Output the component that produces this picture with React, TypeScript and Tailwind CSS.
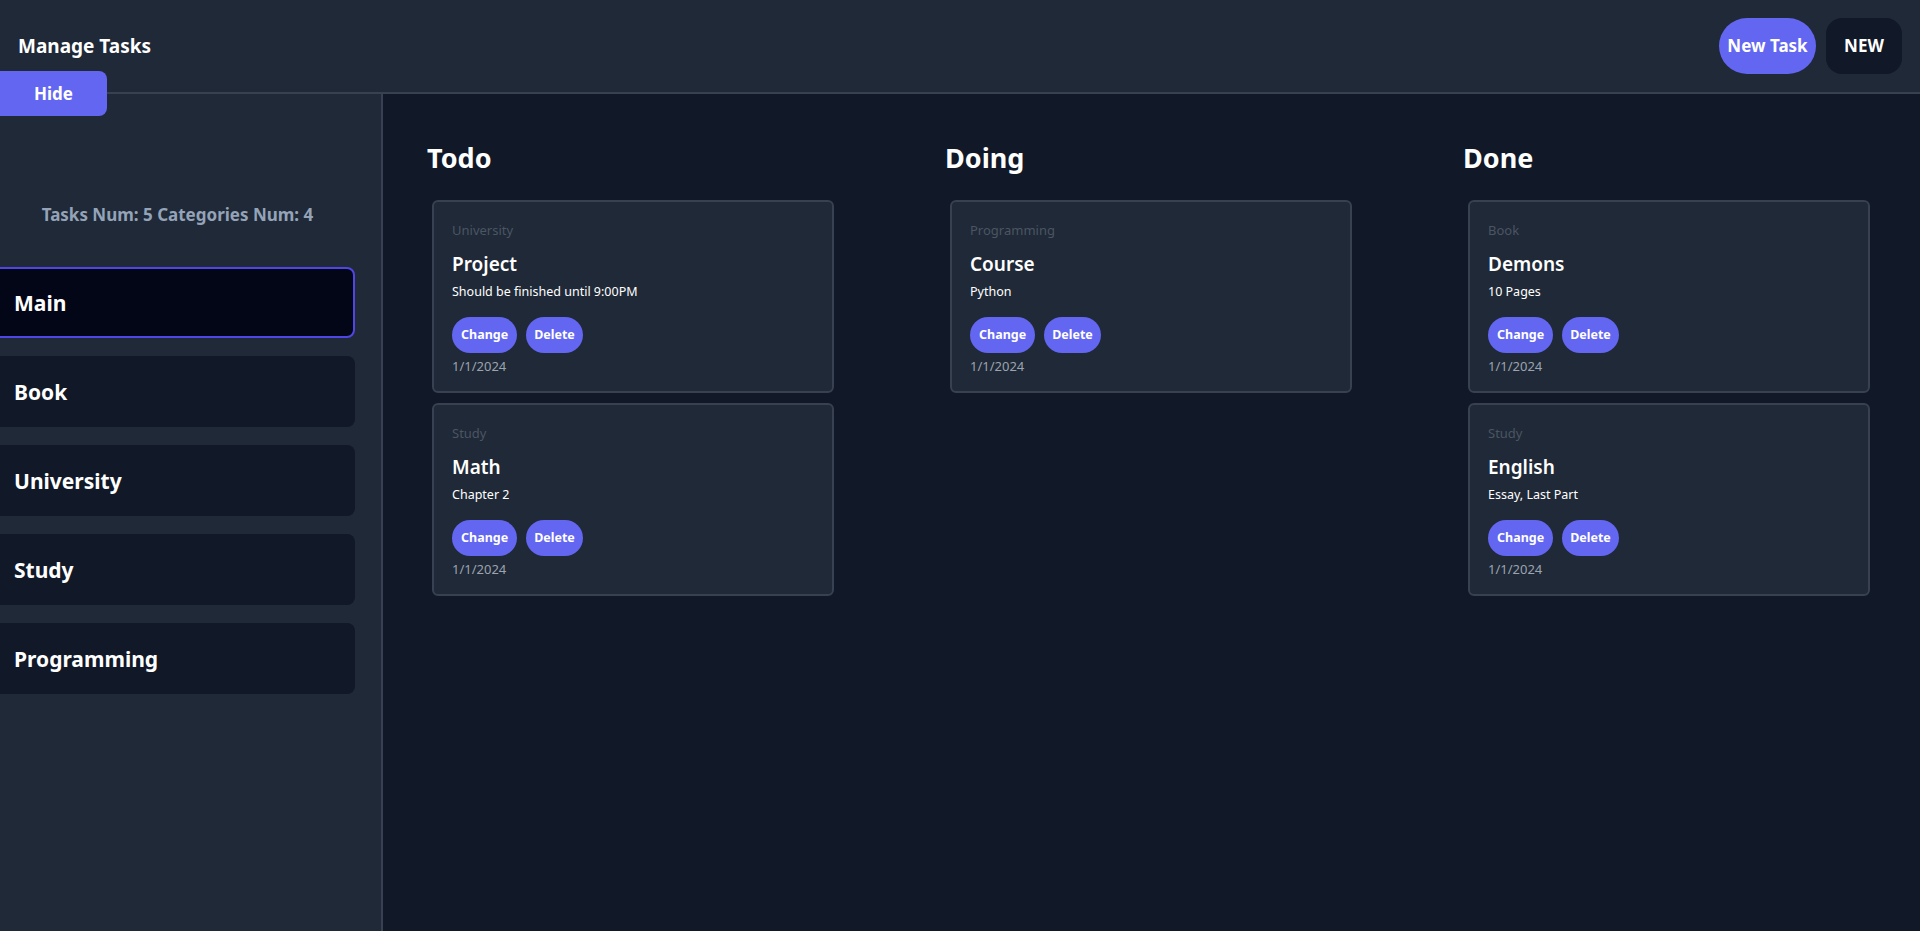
import React from "react";

type Task = {
  category: string;
  title: string;
  description: string;
  date: string;
};

const columns: { name: string; tasks: Task[] }[] = [
  {
    name: "Todo",
    tasks: [
      { category: "University", title: "Project", description: "Should be finished until 9:00PM", date: "1/1/2024" },
      { category: "Study", title: "Math", description: "Chapter 2", date: "1/1/2024" },
    ],
  },
  {
    name: "Doing",
    tasks: [{ category: "Programming", title: "Course", description: "Python", date: "1/1/2024" }],
  },
  {
    name: "Done",
    tasks: [
      { category: "Book", title: "Demons", description: "10 Pages", date: "1/1/2024" },
      { category: "Study", title: "English", description: "Essay, Last Part", date: "1/1/2024" },
    ],
  },
];

const categories = ["Main", "Book", "University", "Study", "Programming"];

function TaskCard({ task }: { task: Task }) {
  return (
    <div className="ml-[5px] w-[402px] rounded-md border-2 border-[#374151] bg-[#1f2937] px-[18px] pt-[18px] pb-[14px]">
      <p className="text-[13px] leading-[21px] text-[#4b5563]">{task.category}</p>
      <h3 className="mt-[8px] text-[19px] leading-[30px] font-semibold text-white">{task.title}</h3>
      <p className="mt-[2px] text-[12.5px] leading-[21px] text-white">{task.description}</p>
      <div className="mt-[15px] flex gap-[9px]">
        <button className="h-[36px] rounded-full bg-[#6366f1] px-[9px] text-[12.5px] font-bold text-white">
          Change
        </button>
        <button className="h-[36px] rounded-full bg-[#6366f1] px-[8px] text-[12.5px] font-bold text-white">
          Delete
        </button>
      </div>
      <p className="mt-[3px] text-[13px] leading-[21px] text-[#9ca3af]">{task.date}</p>
    </div>
  );
}

export default function App() {
  return (
    <div className="flex h-[931px] flex-col bg-[#111827] font-['Noto_Sans','Lato',sans-serif] text-white">
      {/* Header */}
      <header className="relative flex h-[94px] shrink-0 items-center justify-between border-b-2 border-[#374151] bg-[#1f2937] pl-[18px] pr-[18px]">
        <h1 className="text-[19px] font-bold">Manage Tasks</h1>
        <div className="flex gap-[10px]">
          <button className="h-[56px] w-[97px] rounded-full bg-[#6366f1] text-[17px] font-bold">New Task</button>
          <button className="h-[56px] w-[76px] rounded-2xl bg-[#111827] text-[17px] font-bold">NEW</button>
        </div>
        <button className="absolute top-[71px] left-0 z-10 h-[45px] w-[107px] rounded-r-lg bg-[#6366f1] text-[17px] font-bold">
          Hide
        </button>
      </header>

      <div className="flex min-h-0 flex-1">
        {/* Sidebar */}
        <aside className="w-[383px] shrink-0 border-r-2 border-[#374151] bg-[#1f2937]">
          <div className="w-[355px]">
            <p className="pt-[109px] text-center text-[17px] leading-[24px] font-bold text-[#94a3b8]">
              Tasks Num: 5 Categories Num: 4
            </p>
            <div className="mt-[40px] flex flex-col gap-[18px]">
              {categories.map((c, i) => (
                <div
                  key={c}
                  className={
                    i === 0
                      ? "-ml-[10px] flex h-[71px] items-center rounded-lg border-2 border-[#4f46e5] bg-[#020617] pt-[3px] pl-[22px] text-[21px] font-bold"
                      : "-ml-[10px] flex h-[71px] items-center rounded-lg bg-[#111827] pt-[3px] pl-[24px] text-[21px] font-bold"
                  }
                >
                  {c}
                </div>
              ))}
            </div>
          </div>
        </aside>

        {/* Board */}
        <main className="flex flex-1 pl-[44px] pt-[44px]">
          {columns.map((col) => (
            <section key={col.name} className="w-[518px]">
              <h2 className="text-[27px] leading-[40px] font-bold">{col.name}</h2>
              <div className="mt-[22px] flex flex-col gap-[10px]">
                {col.tasks.map((t) => (
                  <TaskCard key={t.title} task={t} />
                ))}
              </div>
            </section>
          ))}
        </main>
      </div>
    </div>
  );
}
